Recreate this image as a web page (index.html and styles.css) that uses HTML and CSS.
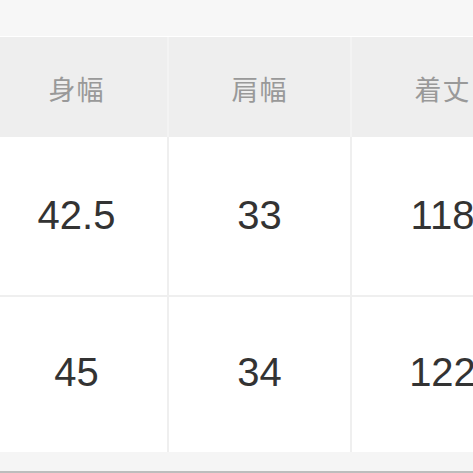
FILE: index.html
```html
<!DOCTYPE html>
<html lang="ja">
<head>
<meta charset="utf-8">
<link rel="stylesheet" href="styles.css">
</head>
<body>
<div class="page">
  <div class="top-band"></div>
  <div class="table">
    <div class="row head">
      <div class="cell">身幅</div>
      <div class="cell">肩幅</div>
      <div class="cell">着丈</div>
    </div>
    <div class="row body r1">
      <div class="cell">42.5</div>
      <div class="cell">33</div>
      <div class="cell">118</div>
    </div>
    <div class="row body r2">
      <div class="cell">45</div>
      <div class="cell">34</div>
      <div class="cell">122</div>
    </div>
  </div>
  <div class="bottom-band"></div>
</div>
</body>
</html>
```

FILE: styles.css
```css
html, body {
  margin: 0;
  padding: 0;
  width: 473px;
  height: 473px;
  overflow: hidden;
  background: #ffffff;
}
.page {
  display: flex;
  flex-direction: column;
  width: 473px;
  height: 473px;
  overflow: hidden;
}
.top-band {
  height: 36px;
  flex: none;
  background: #f7f7f7;
  border-bottom: 1px solid #ffffff;
}
.table {
  margin-left: -14px;
  width: 549px;
  display: flex;
  flex-direction: column;
  flex: none;
}
.row {
  display: grid;
  grid-template-columns: 183px 183px 183px;
}
.cell {
  display: flex;
  align-items: center;
  justify-content: center;
  border-right: 2px solid #efefef;
}
.head {
  height: 100px;
  background: #eeeeee;
}
.head .cell {
  border-right-color: #f3f3f3;
  font-family: "Noto Sans CJK JP", sans-serif;
  font-size: 27px;
  color: #999999;
  letter-spacing: 1px;
  padding-top: 2px;
}
.body .cell {
  font-family: "Liberation Sans", Arial, sans-serif;
  font-size: 40px;
  color: #333333;
  background: #ffffff;
}
.r1 {
  height: 158px;
  border-bottom: 2px solid #efefef;
}
.r1 .cell {
  padding-bottom: 2px;
}
.r2 {
  height: 155px;
}
.r2 .cell {
  padding-bottom: 4px;
}
.bottom-band {
  flex: none;
  height: 19px;
  background: #f5f5f5;
  border-bottom: 2px solid #bdbdbd;
}
```
